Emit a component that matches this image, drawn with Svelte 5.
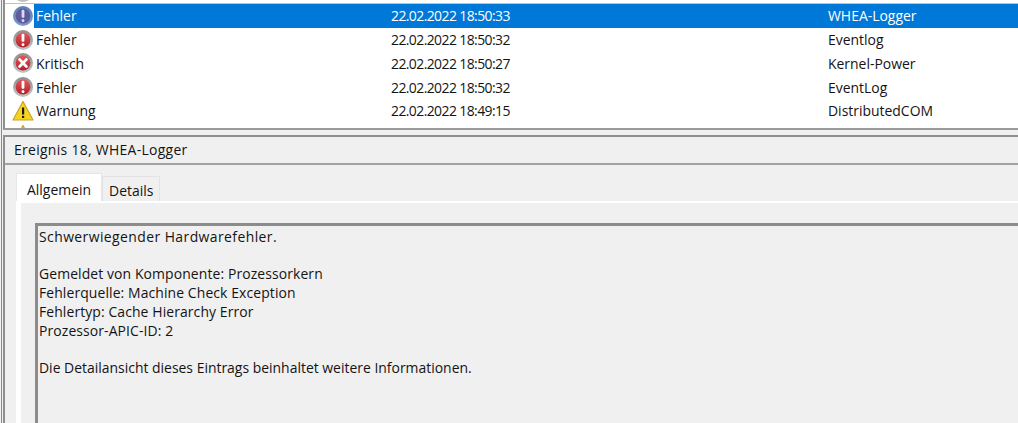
<script>
  const rows = [
    { icon: 'info', level: 'Fehler', date: '22.02.2022 18:50:33', source: 'WHEA-Logger', selected: true },
    { icon: 'error', level: 'Fehler', date: '22.02.2022 18:50:32', source: 'Eventlog' },
    { icon: 'critical', level: 'Kritisch', date: '22.02.2022 18:50:27', source: 'Kernel-Power' },
    { icon: 'error', level: 'Fehler', date: '22.02.2022 18:50:32', source: 'EventLog' },
    { icon: 'warning', level: 'Warnung', date: '22.02.2022 18:49:15', source: 'DistributedCOM' },
    { icon: 'warning', level: '', date: '', source: '' }
  ];
</script>

{#snippet eventIcon(kind)}
  <svg class="icon" viewBox="0 0 22 22" width="22" height="22">
    <defs>
      <linearGradient id="ring" x1="0" y1="0" x2="0" y2="1">
        <stop offset="0" stop-color="#8e8e8e" />
        <stop offset="1" stop-color="#c4c4c4" />
      </linearGradient>
      <linearGradient id="ring-sel" x1="0" y1="0" x2="0" y2="1">
        <stop offset="0" stop-color="#5f7fb5" />
        <stop offset="1" stop-color="#7f9cc8" />
      </linearGradient>
      <linearGradient id="red" x1="0" y1="0" x2="0" y2="1">
        <stop offset="0" stop-color="#e4565c" />
        <stop offset="1" stop-color="#b3202b" />
      </linearGradient>
    </defs>
    {#if kind === 'warning'}
      <path d="M11 1.5 L21 20 H1 Z" fill="#f7d51d" stroke="#c9a227" stroke-width="1.2" stroke-linejoin="round" />
      <rect x="10" y="7.5" width="2.2" height="7" fill="#1a1a1a" />
      <rect x="10" y="15.8" width="2.2" height="2.2" fill="#1a1a1a" />
    {:else}
      <circle cx="11" cy="11" r="10" fill={kind === 'info' ? 'url(#ring-sel)' : 'url(#ring)'} />
      <circle cx="11" cy="11" r="7.4" fill={kind === 'info' ? '#5d5a9e' : 'url(#red)'} />
      {#if kind === 'critical'}
        <path d="M7.6 7.6 L14.4 14.4 M14.4 7.6 L7.6 14.4" stroke="#fff" stroke-width="2.8" stroke-linecap="round" />
      {:else}
        <rect x="9.6" y="4.8" width="2.8" height="8" rx="1" fill={kind === 'info' ? '#d9dcf0' : '#fff'} />
        <rect x="9.6" y="14.2" width="2.8" height="2.8" rx="1" fill={kind === 'info' ? '#d9dcf0' : '#fff'} />
      {/if}
    {/if}
  </svg>
{/snippet}

<div class="window">
  <div class="frame">
    <section class="list">
      <div class="list-top">
        <div class="icon-cell">{@render eventIcon('error')}</div>
      </div>
      {#each rows as row}
        <div class="row">
          <div class="icon-cell">{@render eventIcon(row.icon)}</div>
          <div class="cells" class:selected={row.selected}>
            <span class="level">{row.level}</span>
            <span class="date">{row.date}</span>
            <span class="source">{row.source}</span>
          </div>
        </div>
      {/each}
    </section>

    <section class="details">
      <header class="title">Ereignis 18, WHEA-Logger</header>
      <div class="tabs">
        <div class="tab active">Allgemein</div>
        <div class="tab">Details</div>
      </div>
      <div class="tab-body">
        <div class="message">
          <p class="lead">Schwerwiegender Hardwarefehler.</p>
          <p class="facts">
            Gemeldet von Komponente: Prozessorkern<br />
            Fehlerquelle: Machine Check Exception<br />
            Fehlertyp: Cache Hierarchy Error<br />
            Prozessor-APIC-ID: 2
          </p>
          <p>Die Detailansicht dieses Eintrags beinhaltet weitere Informationen.</p>
        </div>
      </div>
    </section>
  </div>
</div>

<style>
  :global(body) {
    margin: 0;
    background: #f0f0f0;
  }

  .window {
    width: 1018px;
    height: 423px;
    overflow: hidden;
    box-sizing: border-box;
    padding-left: 1px;
    font-family: "Open Sans", "Noto Sans", sans-serif;
    font-size: 13.95px;
    color: #141414;
    background: #f0f0f0;
  }

  .frame {
    height: 100%;
    display: flex;
    flex-direction: column;
    border-left: 1px solid #8a8a8a;
    padding-left: 1px;
  }

  .list {
    height: 128px;
    flex: none;
    overflow: hidden;
    background: #fff;
    border-left: 2px solid #8f8f8f;
    border-bottom: 2px solid #9a9a9a;
  }

  .list-top {
    height: 3px;
    display: flex;
    align-items: flex-end;
    overflow: hidden;
    background: #fff;
    border-bottom: 1px solid #b9c4cf;
  }

  .row {
    display: flex;
    height: 23.75px;
  }

  .icon-cell {
    width: 29px;
    flex: none;
    display: flex;
    align-items: center;
    justify-content: flex-end;
    box-sizing: border-box;
  }

  .icon {
    flex: none;
  }

  .cells {
    flex: 1;
    display: flex;
    align-items: center;
    padding-left: 2px;
  }

  .selected {
    background: #0078d7;
    color: #fff;
  }

  .level {
    width: 355px;
  }

  .date {
    width: 437px;
    letter-spacing: -0.58px;
  }

  .details {
    flex: 1;
    display: flex;
    flex-direction: column;
    margin-top: 5px;
    border-left: 2px solid #8f8f8f;
    border-top: 2px solid #8f8f8f;
  }

  .title {
    height: 26px;
    line-height: 25px;
    padding-left: 9px;
    letter-spacing: 0.3px;
    border-bottom: 2px solid #a3a3a3;
    background: #f0f0f0;
  }

  .tabs {
    display: flex;
    align-items: flex-end;
    margin-top: 8px;
    padding-left: 11px;
  }

  .tab {
    height: 24px;
    line-height: 28px;
    padding: 0 6px;
    background: #f0f0f0;
    border: 1px solid #e3e3e3;
    border-bottom: 0;
  }

  .tab.active {
    height: 27px;
    line-height: 32px;
    padding: 0 10px;
    background: #fff;
    border-color: #e6e6e6;
  }

  .tab-body {
    flex: 1;
    margin-left: 11px;
    border-left: 5px solid #fff;
    border-top: 2px solid #fff;
    background: #f0f0f0;
    padding: 20px 0 0 14px;
    min-height: 0;
  }

  .message {
    height: 100%;
    box-sizing: border-box;
    border-left: 3px solid #8c8c8c;
    border-top: 3px solid #8c8c8c;
    padding: 2px 0 0 1px;
    line-height: 18.7px;
    margin-right: -10px;
  }

  .message p {
    margin: 0 0 18.7px;
  }

  .message .lead {
    letter-spacing: 0.42px;
  }

  .message .facts {
    letter-spacing: 0.1px;
  }
</style>
